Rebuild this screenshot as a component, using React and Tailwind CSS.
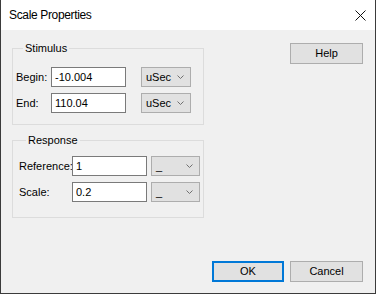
import { useState } from 'react'

const Chevron = () => (
    <svg width="7" height="4" viewBox="0 0 7 4" className="shrink-0">
        <path d="M0.5 0.5 L3.5 3.5 L6.5 0.5" fill="none" stroke="#707070" strokeWidth="1" />
    </svg>
)

const Combo = ({ value, width }) => (
    <div className={`${width} h-[20px] shrink-0 flex items-center justify-between border border-[#adadad] bg-[#e1e1e1] pl-[4px] pr-[6px]`}>
        <span>{value}</span>
        <Chevron />
    </div>
)

const Field = ({ value, onChange }) => (
    <input
        type="text"
        value={value}
        onChange={(e) => onChange(e.target.value)}
        className="w-[75px] h-[20px] shrink-0 border border-[#7a7a7a] bg-white px-[3px] text-[11px] text-black outline-none"
    />
)

const Button = ({ children, primary }) => (
    <button
        className={primary
            ? "w-[72px] h-[21px] border-2 border-[#0078d7] bg-[#e1e1e1] text-[11px] text-black"
            : "w-[73px] h-[21px] border border-[#adadad] bg-[#e1e1e1] text-[11px] text-black"}
    >
        {children}
    </button>
)

const App = () => {
    const [begin, setBegin] = useState("-10.004");
    const [end, setEnd] = useState("110.04");
    const [reference, setReference] = useState("1");
    const [scale, setScale] = useState("0.2");

    return (
        <div className="w-[376px] h-[294px] flex flex-col border-x border-b border-[#3b3b3b] bg-[#f0f0f0] font-['Liberation_Sans',Arial,sans-serif] text-[11px] text-black">
            {/* title bar */}
            <div className="h-[30px] shrink-0 flex items-center justify-between bg-white pl-[8px] pr-[9px]">
                <span className="text-[12px] tracking-[-0.35px]">Scale Properties</span>
                <svg width="11" height="11" viewBox="0 0 11 11">
                    <path d="M0.5 0.5 L10.5 10.5 M10.5 0.5 L0.5 10.5" fill="none" stroke="#111" strokeWidth="1" />
                </svg>
            </div>

            <div className="flex-1 flex flex-col">
                <div className="flex justify-between">
                    <div className="pl-[11px] pt-[11px] flex flex-col gap-[8px]">
                        <fieldset className="w-[192px] border border-[#dcdcdc] pl-[3px] pt-[12px] pb-[11px]">
                            <legend className="ml-[7px] px-[2px] leading-[14px]">Stimulus</legend>
                            <div className="flex flex-col gap-[6px]">
                                <div className="flex items-center">
                                    <span className="w-[35px] shrink-0">Begin:</span>
                                    <Field value={begin} onChange={setBegin} />
                                    <div className="ml-[15px]"><Combo value="uSec" width="w-[50px]" /></div>
                                </div>
                                <div className="flex items-center">
                                    <span className="w-[35px] shrink-0">End:</span>
                                    <Field value={end} onChange={setEnd} />
                                    <div className="ml-[15px]"><Combo value="uSec" width="w-[50px]" /></div>
                                </div>
                            </div>
                        </fieldset>

                        <fieldset className="w-[192px] border border-[#dcdcdc] pl-[6px] pt-[9px] pb-[15px]">
                            <legend className="ml-[7px] px-[2px] leading-[14px]">Response</legend>
                            <div className="flex flex-col gap-[6px]">
                                <div className="flex items-center">
                                    <span className="w-[53px] shrink-0 whitespace-nowrap">Reference:</span>
                                    <Field value={reference} onChange={setReference} />
                                    <div className="ml-[4px]"><Combo value="_" width="w-[49px]" /></div>
                                </div>
                                <div className="flex items-center">
                                    <span className="w-[53px] shrink-0">Scale:</span>
                                    <Field value={scale} onChange={setScale} />
                                    <div className="ml-[4px]"><Combo value="_" width="w-[49px]" /></div>
                                </div>
                            </div>
                        </fieldset>
                    </div>

                    <div className="pr-[12px] pt-[13px]">
                        <Button>Help</Button>
                    </div>
                </div>

                <div className="mt-auto flex justify-end gap-[6px] pr-[12px] pb-[11px]">
                    <Button primary>OK</Button>
                    <Button>Cancel</Button>
                </div>
            </div>
        </div>
    )
}

export default App
